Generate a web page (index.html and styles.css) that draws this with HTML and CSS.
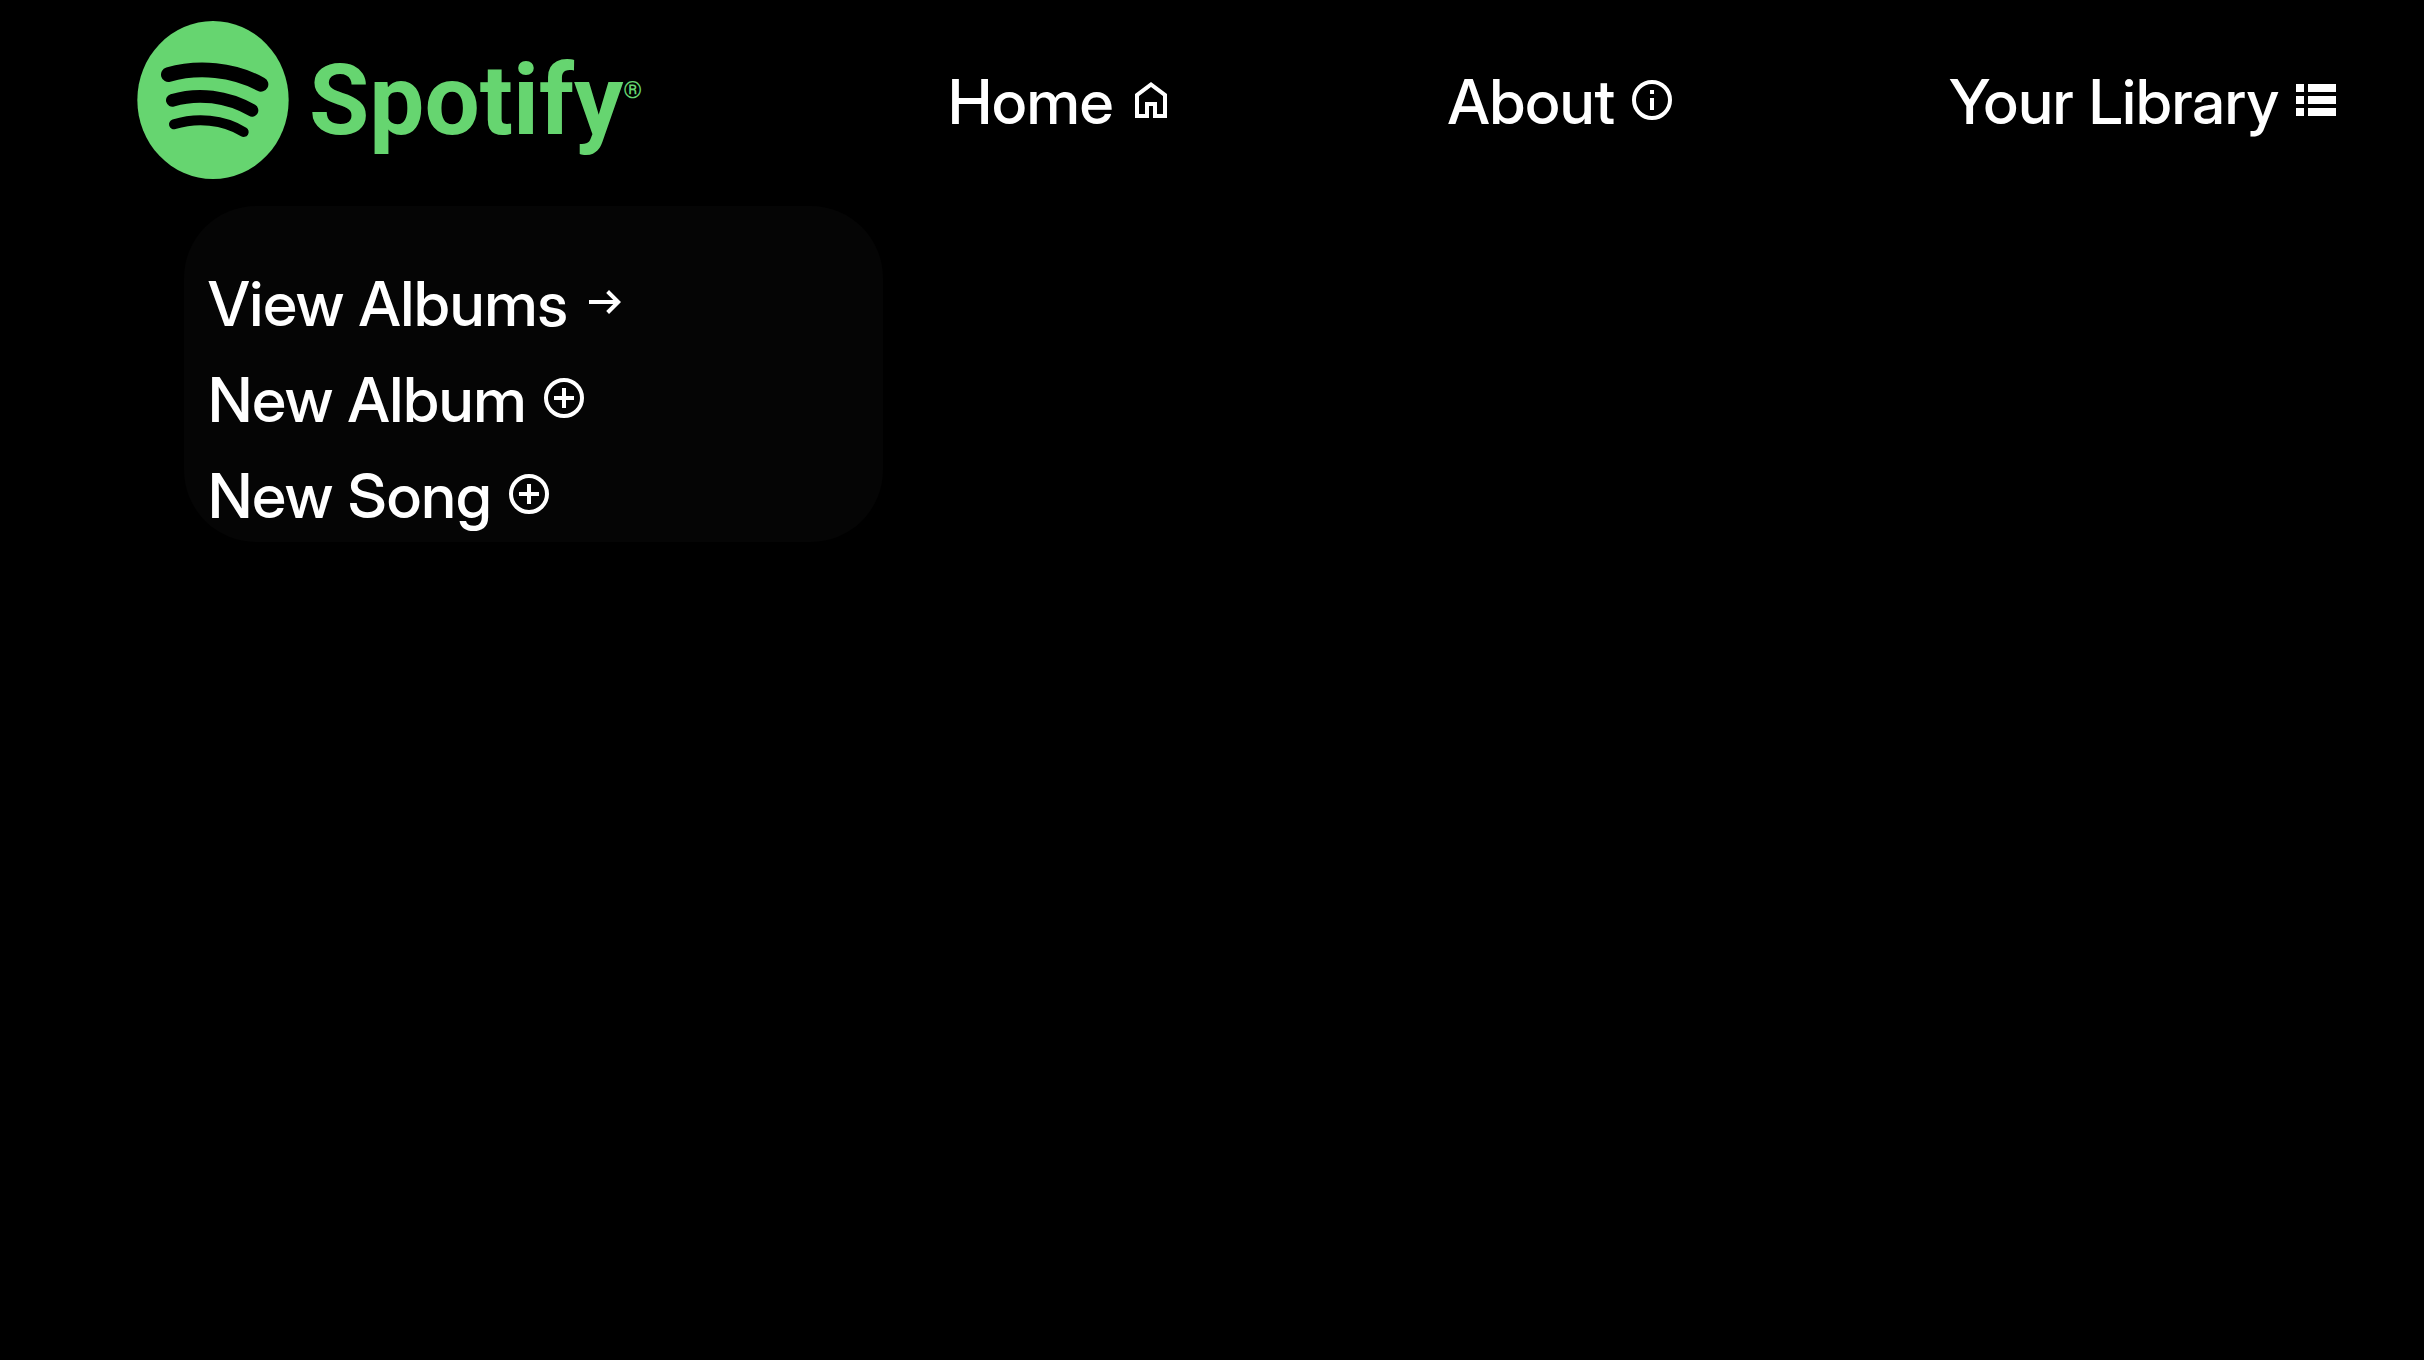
FILE: index.html
```html
<!DOCTYPE html>
<html lang="en">
<head>
  <meta charset="utf-8">
  <title>Spotify</title>
  <link rel="stylesheet" href="styles.css">
</head>
<body>
  <header class="navbar">
    <a class="logo" href="#">
      <svg class="logo-mark" viewBox="52 33 454 474" aria-hidden="true">
        <ellipse class="logo-disc" cx="279" cy="270" rx="227" ry="237"/>
        <path class="logo-wave" stroke-width="44" d="M145 194C235 168 340 178 423 223"/>
        <path class="logo-wave" stroke-width="38" d="M157 271C235 248 320 258 396 301"/>
        <path class="logo-wave" stroke-width="30" d="M162 343C230 322 310 328 371 366"/>
      </svg>
      <span class="logo-name">Spotify</span>
      <span class="logo-registered">®</span>
    </a>
    <nav class="nav-links">
      <a class="link" href="#">Home<svg class="icon" viewBox="0 0 24 24" aria-hidden="true"><path d="M6 19h3v-6h6v6h3v-9l-6-4.5L6 10Zm-2 2V9l8-6 8 6v12h-7v-6h-2v6Z"/></svg></a>
      <a class="link" href="#">About<svg class="icon" viewBox="0 0 24 24" aria-hidden="true"><circle class="ring" cx="12" cy="12" r="9"/><path d="M11 7h2v2h-2zM11 11h2v6h-2z"/></svg></a>
      <a class="link" href="#">Your Library<svg class="icon" viewBox="0 0 24 24" aria-hidden="true"><path d="M2 4h4v4H2zM8 4h14v4H8zM2 10h4v4H2zM8 10h14v4H8zM2 16h4v4H2zM8 16h14v4H8z"/></svg></a>
    </nav>
  </header>
  <main class="panel">
    <a class="link" href="#">View Albums<svg class="icon" viewBox="0 0 24 24" aria-hidden="true"><path d="m14 18-1.4-1.45L16.15 13H4v-2h12.15L12.6 7.45 14 6l6 6Z"/></svg></a>
    <a class="link" href="#">New Album<svg class="icon" viewBox="0 0 24 24" aria-hidden="true"><circle class="ring" cx="12" cy="12" r="9"/><path d="M11 7h2v4h4v2h-4v4h-2v-4H7v-2h4z"/></svg></a>
    <a class="link" href="#">New Song<svg class="icon" viewBox="0 0 24 24" aria-hidden="true"><circle class="ring" cx="12" cy="12" r="9"/><path d="M11 7h2v4h4v2h-4v4h-2v-4H7v-2h4z"/></svg></a>
  </main>
</body>
</html>
```
FILE: styles.css
```css
* {
  box-sizing: border-box;
}

body {
  margin: 0;
  background: #000;
  color: #fff;
  font-family: "Inter Display", "Liberation Sans", Arial, sans-serif;
  font-size: 62px;
  font-weight: 500;
  line-height: 92px;
}

.navbar {
  display: flex;
  align-items: center;
  justify-content: space-between;
  gap: 273px;
  padding: 0 84px 0 137px;
}

.logo {
  display: flex;
  align-items: center;
  flex: 0 0 538px;
  height: 200px;
  color: #66d570;
  text-decoration: none;
}

.logo-mark {
  width: 152px;
  height: 158px;
}

.logo-disc {
  fill: #66d570;
}

.logo-wave {
  fill: none;
  stroke: #000;
  stroke-linecap: round;
}

.logo-name {
  margin-left: 20px;
  padding-top: 2px;
  font-family: Roboto, sans-serif;
  font-size: 98px;
  font-weight: 700;
}

.logo-registered {
  padding-bottom: 20px;
  font-family: Roboto, sans-serif;
  font-size: 24px;
  font-weight: 400;
  line-height: 32px;
}

.nav-links {
  display: flex;
  flex: 1;
  justify-content: space-between;
  padding-top: 4px;
}

.link {
  color: #fff;
  text-decoration: none;
  white-space: nowrap;
}

.icon {
  width: 48px;
  height: 48px;
  margin-left: 13px;
  fill: currentColor;
}

.ring {
  fill: none;
  stroke: currentColor;
  stroke-width: 2;
}

.panel {
  display: flex;
  flex-direction: column;
  align-items: flex-start;
  gap: 4px;
  width: 699px;
  margin: 6px 0 0 184px;
  padding: 52px 24px 0;
  background: #050505;
  border-radius: 72px;
}
```
